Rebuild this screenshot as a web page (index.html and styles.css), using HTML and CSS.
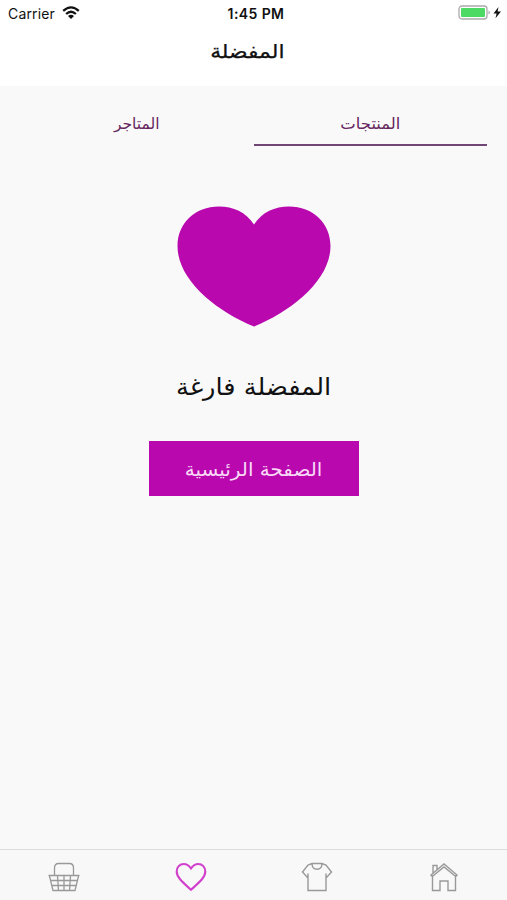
FILE: index.html
```html
<!DOCTYPE html>
<html lang="ar" dir="rtl">
<head>
<meta charset="utf-8">
<title>المفضلة</title>
<link rel="stylesheet" href="styles.css">
</head>
<body>
<div class="screen">
  <header class="header">
    <div class="status" dir="ltr">
      <div class="carrier"><span>Carrier</span>
        <svg class="wifi" width="18" height="13" viewBox="0 0 18 13"><g fill="none" stroke="#111" stroke-width="2.3"><path d="M1.2 4.9Q9-2.1 16.8 4.9M4.1 8Q9 3.5 13.9 8"/></g><path d="M6 10Q9 7.3 12 10L9 13Z" fill="#111"/></svg>
      </div>
      <div class="time">1:45 PM</div>
      <div class="power">
        <svg width="46" height="16" viewBox="0 0 46 16"><rect x="1" y="1" width="28" height="13" rx="3" fill="#fff" stroke="#aaa" stroke-width="1.3"/><rect x="3" y="3" width="24" height="9" rx="1" fill="#4cd964"/><path d="M30.5 5.500q3 2 0 4z" fill="#aaa"/><path d="M40.500 2L35.500 8.400H38.600L37.500 13.200L43 6.500H39.600Z" fill="#111"/></svg>
      </div>
    </div>
    <h1 class="title"><span>المفضلة</span></h1>
  </header>
  <nav class="tabs">
    <div class="tab tab-active"><span class="products">المنتجات</span></div>
    <div class="tab"><span class="stores">المتاجر</span></div>
  </nav>
  <main class="empty">
    <svg class="heart" width="154" height="121" viewBox="0 0 154 121"><path d="M77 18.500C69 6 56 .5 42 .5C18 .5 .5 17 .5 40C.5 74 39 105 77 120.500C115 105 153.500 74 153.500 40C153.500 17 136 .5 112 .5C98 .5 85 6 77 18.500Z" fill="#b808ae"/></svg>
    <p class="message"><span>المفضلة فارغة</span></p>
    <div class="button"><span>الصفحة الرئيسية</span></div>
  </main>
  <footer class="bottom">
    <div class="item"><svg width="32" height="30" viewBox="0 0 32 30"><g fill="none" stroke="#999" stroke-width="1.300"><path d="M.5 13.500H31.500M1.500 14L5 28.500H27L30.500 14M3 18.500H29M4 23.500H28M9.500 14L10.500 28.500M16 14V28.500M22.500 14L21.500 28.500M6.500 13V6Q6.500 1.500 10.500 1.500H21.500Q25.500 1.500 25.500 6V13"/></g></svg></div>
    <div class="item"><svg width="32" height="30" viewBox="0 0 32 30"><path d="M16 6.500C13.800 3.300 11.700 2 8.800 2C4.600 2 1.700 5.200 1.700 9.500C1.700 15.500 8 20.500 16 27.800C24 20.500 30.300 15.500 30.300 9.500C30.300 5.200 27.400 2 23.200 2C20.300 2 18.200 3.300 16 6.500Z" fill="none" stroke="#d141cc" stroke-width="2.100"/></svg></div>
    <div class="item"><svg width="32" height="30" viewBox="0 0 32 30"><g fill="none" stroke="#999" stroke-width="1.400"><path d="M11 1.500L7 3L1.500 10L6 15L7 14V28.500H25V14L26 15L30.500 10L25 3L21 1.500ZM7 14V11.500M25 14V11.500M11 1.500Q11 7.300 16 7.300Q21 7.300 21 1.500"/></g></svg></div>
    <div class="item"><svg width="32" height="30" viewBox="0 0 32 30"><g fill="none" stroke="#999" stroke-width="1.400"><path d="M3 13L16 2L29 13L27.800 14.500L16 5L4.200 14.500ZM4.500 14.500V28.500H12V19H20V28.500H27.500V14.500M5 11V3.500H9V7.500"/></g></svg></div>
  </footer>
</div>
</body>
</html>
```
FILE: styles.css
```css
* { box-sizing: border-box; }
body { margin: 0; background: #f9f9f9; font-family: "DejaVu Sans", sans-serif; color: #111; }
.screen { width: 507px; height: 900px; display: flex; flex-direction: column; overflow: hidden; }
.header { height: 86px; background: #fff; flex: none; }
.status { height: 26px; display: grid; grid-template-columns: 1fr 1fr 1fr; align-items: center; font-family: Inter, sans-serif; font-size: 14px; }
.carrier { display: flex; align-items: center; gap: 7px; padding-left: 8px; letter-spacing: .15px; }
.wifi { margin-top: -1px; }
.time { text-align: center; font-weight: 600; padding-left: 5px; letter-spacing: .4px; }
.power { display: flex; justify-content: flex-end; padding-right: 3px; }
.title { margin: 0; height: 50px; display: flex; align-items: center; justify-content: center; padding-right: 13px; font-size: 19px; font-weight: 400; line-height: 30px; -webkit-text-stroke: .25px; }
.title span, .tab span, .message span, .button span { display: block; white-space: nowrap; }
.title span { transform: scaleX(1.15); }
.tabs { height: 60px; flex: none; display: flex; padding: 0 20px; color: #662760; font-size: 15.500px; }
.tab { flex: 1; display: flex; align-items: center; justify-content: center; padding-top: 18px; border-bottom: 2px solid transparent; }
.products { transform: scaleX(1.06); }
.tab-active { border-color: #714576; }
.empty { flex: 1; display: flex; flex-direction: column; align-items: center; padding-top: 60px; }
.heart { display: block; }
.message { margin: 35px 0 0; height: 50px; line-height: 50px; font-size: 24px; }
.message span { transform: scaleX(1.07); }
.button { width: 210px; height: 55px; margin-top: 29px; background: #b808ae; color: #f9d9f7; font-size: 19px; display: flex; align-items: center; justify-content: center; }
.button span { transform: scaleX(1.05); }
.bottom { height: 51px; border-top: 1px solid #dcdcdc; display: flex; direction: ltr; background: #f8f8f8; }
.item { flex: 1; display: flex; justify-content: center; padding: 12px 0 0 1px; }
.item svg { display: block; }
```
